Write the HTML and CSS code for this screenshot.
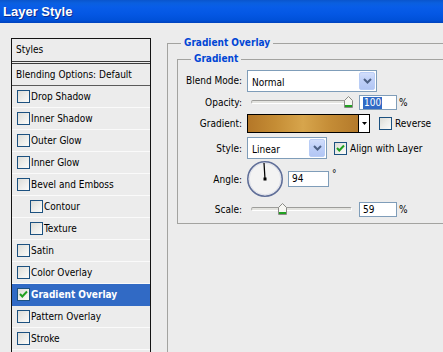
FILE: index.html
```html
<!DOCTYPE html>
<html>
<head>
<meta charset="utf-8">
<title>Layer Style</title>
<link rel="stylesheet" href="styles.css">
</head>
<body>
<div class="window">
  <div class="titlebar">Layer Style</div>
  <div class="client">
    <div class="sidebar">
      <div class="side-head">Styles</div>
      <div class="side-blend">Blending Options: Default</div>
      <div class="item"><span class="cb"></span>Drop Shadow</div>
      <div class="item"><span class="cb"></span>Inner Shadow</div>
      <div class="item"><span class="cb"></span>Outer Glow</div>
      <div class="item"><span class="cb"></span>Inner Glow</div>
      <div class="item"><span class="cb"></span>Bevel and Emboss</div>
      <div class="item sub"><span class="cb"></span>Contour</div>
      <div class="item sub"><span class="cb"></span>Texture</div>
      <div class="item"><span class="cb"></span>Satin</div>
      <div class="item"><span class="cb"></span>Color Overlay</div>
      <div class="item selected"><span class="cb"><svg class="check" width="11" height="11" viewBox="0 0 11 11"><path d="M2 5 L4.3 7.5 L9 2.5" fill="none" stroke="#21a121" stroke-width="2"/></svg></span>Gradient Overlay</div>
      <div class="item"><span class="cb"></span>Pattern Overlay</div>
      <div class="item"><span class="cb"></span>Stroke</div>
    </div>

    <fieldset class="group outer">
      <legend>Gradient Overlay</legend>
      <fieldset class="group inner">
        <legend>Gradient</legend>

        <div class="row r-blend">
          <span class="lbl">Blend Mode:</span>
          <div class="select w-blend">
            <span class="sel-text">Normal</span>
            <span class="dd"><svg width="9" height="6" viewBox="0 0 9 6"><path d="M1 1 L4.5 4.5 L8 1" fill="none" stroke="#4d6185" stroke-width="2"/></svg></span>
          </div>
        </div>

        <div class="row r-opac">
          <span class="lbl">Opacity:</span>
          <div class="slider">
            <div class="track"></div>
            <span class="thumb" style="left: 93px"><svg width="9" height="12" viewBox="0 0 9 12"><path d="M0.5 4.5 L4.5 0.5 L8.5 4.5 V11.5 H0.5 Z" fill="#f6f6f2" stroke="#8a8a86"/><rect x="1" y="9" width="7" height="2" fill="#21a121"/></svg></span>
          </div>
          <div class="field w-pct"><span class="hl">100</span></div>
          <span class="unit">%</span>
        </div>

        <div class="row r-grad">
          <span class="lbl">Gradient:</span>
          <div class="gswatch">
            <div class="gfill"></div>
            <div class="garrow"><svg width="5" height="3" viewBox="0 0 5 3"><path d="M0 0 H5 L2.5 3 Z" fill="#000"/></svg></div>
          </div>
          <span class="cb cb-rev"></span>
          <span class="cb-label">Reverse</span>
        </div>

        <div class="row r-style">
          <span class="lbl">Style:</span>
          <div class="select w-style">
            <span class="sel-text">Linear</span>
            <span class="dd"><svg width="9" height="6" viewBox="0 0 9 6"><path d="M1 1 L4.5 4.5 L8 1" fill="none" stroke="#4d6185" stroke-width="2"/></svg></span>
          </div>
          <span class="cb cb-align"><svg class="check" width="11" height="11" viewBox="0 0 11 11"><path d="M2 5 L4.3 7.5 L9 2.5" fill="none" stroke="#21a121" stroke-width="2"/></svg></span>
          <span class="cb-label">Align with Layer</span>
        </div>

        <div class="row r-angle">
          <span class="lbl">Angle:</span>
          <svg class="dial" width="38" height="38" viewBox="0 0 38 38">
            <circle cx="19" cy="19" r="17.2" fill="#f3f3f3" stroke="#5f6e98" stroke-width="1.6"/>
            <circle cx="19" cy="19" r="15.8" fill="none" stroke="#d8dbe6" stroke-width="0.8"/>
            <line x1="19" y1="19" x2="18" y2="3" stroke="#000" stroke-width="1.2"/>
            <rect x="17.5" y="17.5" width="3" height="3" fill="#000"/>
          </svg>
          <div class="field w-angle">94</div>
          <span class="deg">°</span>
        </div>

        <div class="row r-scale">
          <span class="lbl">Scale:</span>
          <div class="slider">
            <div class="track"></div>
            <span class="thumb" style="left: 27px"><svg width="9" height="12" viewBox="0 0 9 12"><path d="M0.5 4.5 L4.5 0.5 L8.5 4.5 V11.5 H0.5 Z" fill="#f6f6f2" stroke="#8a8a86"/><rect x="1" y="9" width="7" height="2" fill="#21a121"/></svg></span>
          </div>
          <div class="field w-pct">59</div>
          <span class="unit">%</span>
        </div>
      </fieldset>
    </fieldset>
  </div>
</div>
</body>
</html>
```

FILE: styles.css
```css
* { box-sizing: border-box; }

html, body {
  margin: 0;
  padding: 0;
}

body {
  width: 443px;
  height: 352px;
  overflow: hidden;
  background: #ececec;
  font-family: "DejaVu Sans Condensed", "DejaVu Sans", sans-serif;
  font-stretch: condensed;
  font-size: 10px;
  color: #000;
}

.window {
  width: 443px;
  height: 352px;
  display: flex;
  flex-direction: column;
}

.titlebar {
  flex: none;
  height: 23px;
  line-height: 23px;
  padding-left: 3px;
  font-family: "Liberation Sans", Arial, sans-serif;
  font-stretch: normal;
  font-weight: bold;
  font-size: 13px;
  color: #fff;
  text-shadow: 1px 1px 0 #0b2a8e;
  background: linear-gradient(to bottom, #0a55cc 0px, #0a5fdf 3px, #085de8 7px, #0457e4 14px, #0051d9 20px, #0042bd 23px);
}

.client {
  flex: 1;
  display: flex;
  align-items: flex-start;
  overflow: hidden;
}

/* ---------- sidebar ---------- */
.sidebar {
  flex: none;
  width: 140px;
  margin: 15px 0 0 11px;
  border: 1px solid #141414;
  background: #ececec;
  min-height: 330px;
}

.side-head {
  height: 25px;
  line-height: 21px;
  padding-left: 4px;
  border-bottom: 3px double #3c3c3c;
}

.side-blend {
  height: 22px;
  line-height: 21px;
  padding-left: 4px;
  border-bottom: 1px solid #5a5a5a;
}

.item {
  height: 22px;
  display: flex;
  align-items: center;
  padding-left: 5px;
  border-bottom: 1px solid #fafafa;
  white-space: nowrap;
}

.item.sub { padding-left: 18px; }

.item.selected {
  background: #316ac5;
  border-bottom-color: #316ac5;
  color: #fff;
  font-weight: bold;
}

.cb {
  flex: none;
  display: inline-flex;
  align-items: center;
  justify-content: center;
  width: 13px;
  height: 13px;
  margin-right: 1px;
  border: 1px solid #1c5180;
  background: linear-gradient(135deg, #dcdcd6 0%, #ededea 50%, #fbfbf9 100%);
}

.check { display: block; }

/* ---------- groups ---------- */
.group {
  margin: 0;
  padding: 0;
  min-width: 0;
  border: 1px solid #a3a3a0;
}

.group > legend {
  padding: 0 3px;
  margin-left: 13px;
  line-height: 12px;
  font-weight: bold;
  color: #0046d5;
}

.outer {
  flex: none;
  width: 320px;
  min-height: 340px;
  margin: 14px 0 0 16px;
}

.inner {
  width: 300px;
  margin: 4px 0 0 9px;
  padding: 5px 0 6px 0;
}

/* ---------- form rows ---------- */
.row {
  display: flex;
  align-items: center;
  white-space: nowrap;
}

.lbl {
  flex: none;
  width: 64px;
  margin-right: 5px;
  text-align: right;
}

.r-blend { height: 22px; }
.r-blend .lbl { padding-bottom: 2px; }
.r-opac { height: 16px; margin-top: 2px; }
.r-grad { height: 19px; margin-top: 4px; }
.r-style { height: 22px; margin-top: 4px; }
.r-angle { height: 38px; margin-top: 1px; }
.r-scale { height: 16px; margin-top: 3px; }

.select {
  flex: none;
  height: 22px;
  display: flex;
  align-items: center;
  border: 1px solid #7f9db9;
  background: #fff;
  padding: 1px;
}

.w-blend { width: 130px; }
.w-style { width: 80px; }

.sel-text {
  flex: 1;
  padding-left: 3px;
  padding-top: 2px;
}

.dd {
  flex: none;
  width: 16px;
  height: 18px;
  display: flex;
  align-items: center;
  justify-content: center;
  border: 1px solid #b9cdf6;
  border-radius: 2px;
  background: linear-gradient(to bottom, #d2defb 0%, #bfd0f8 45%, #b2c6f4 100%);
}

.slider {
  flex: none;
  position: relative;
  width: 112px;
  height: 16px;
  display: flex;
  align-items: center;
}

.track {
  width: 101px;
  height: 4px;
  margin-left: 4px;
  border-radius: 2px;
  border-top: 1px solid #9d9d9a;
  border-left: 1px solid #b0b0ad;
  border-bottom: 1px solid #ffffff;
  border-right: 1px solid #ffffff;
  background: #e3e3df;
}

.thumb {
  position: absolute;
  top: 2px;
  width: 9px;
  height: 12px;
  margin-left: 4px;
}

.thumb svg { display: block; }

.field {
  flex: none;
  height: 15px;
  line-height: 13px;
  padding-left: 3px;
  border: 1px solid #7f9db9;
  background: #fff;
}

.w-pct { width: 38px; }
.w-angle { width: 41px; height: 16px; line-height: 14px; margin-left: 4px; }

.hl {
  display: inline-block;
  line-height: 12px;
  padding: 0 1px;
  background: #316ac5;
  color: #fff;
}

.unit { margin-left: 2px; }

.deg {
  align-self: flex-start;
  margin-top: 8px;
  margin-left: 3px;
}

.gswatch {
  flex: none;
  width: 123px;
  height: 19px;
  display: flex;
  border: 1px solid #000;
  background: #fff;
}

.gfill {
  flex: 1;
  background: linear-gradient(to right, #b47728 0%, #c58d35 25%, #d7a54c 50%, #c48c36 75%, #b47a2b 100%);
}

.garrow {
  flex: none;
  width: 11px;
  display: flex;
  align-items: center;
  justify-content: center;
  border-left: 1px solid #000;
}

.garrow svg { display: block; }

.cb-rev { margin-left: 9px; }
.cb-align { margin-left: 7px; }
.cb-label { margin-left: 2px; }

.dial {
  flex: none;
  display: block;
  margin-left: -1px;
}
```
